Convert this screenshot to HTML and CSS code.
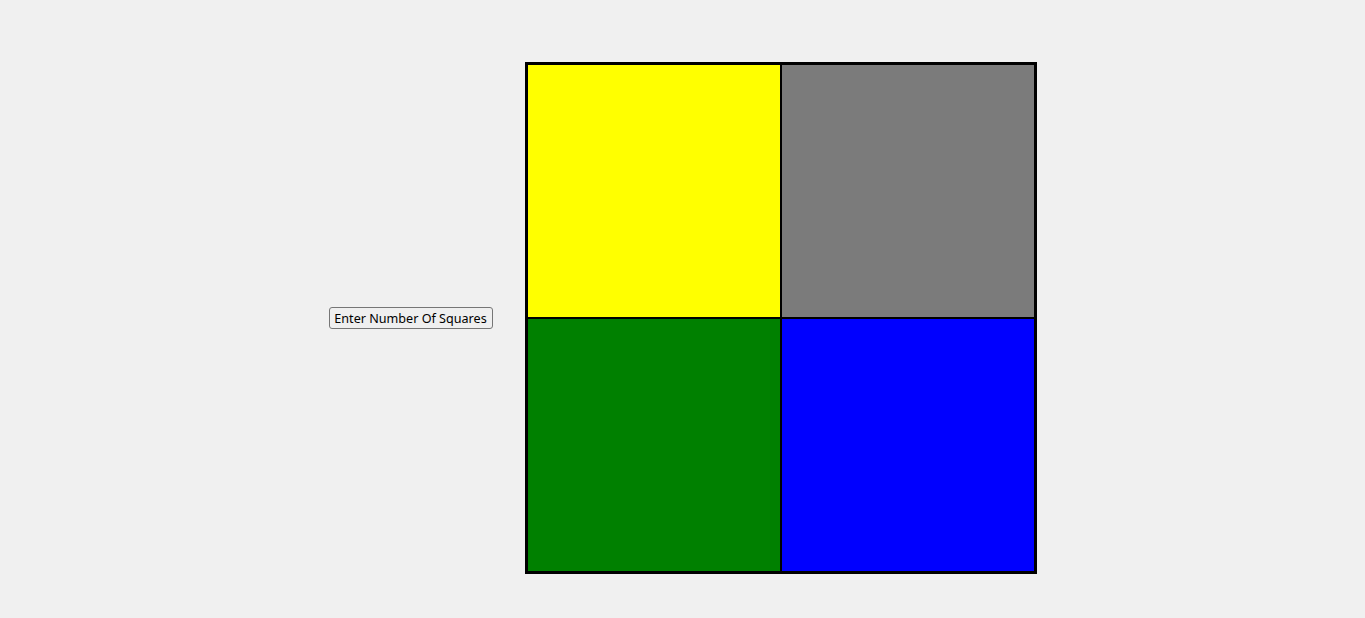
FILE: index.html
```html
<!DOCTYPE html>
<html>
<head>
<meta charset="utf-8">
<link rel="stylesheet" href="styles.css">
</head>
<body>
<div class="page">
  <button class="btn">Enter Number Of Squares</button>
  <div class="grid">
    <div class="cell yellow"></div>
    <div class="cell gray"></div>
    <div class="cell green"></div>
    <div class="cell blue"></div>
  </div>
</div>
</body>
</html>
```
FILE: styles.css
```css
html, body {
  margin: 0;
  padding: 0;
  background: #f0f0f0;
}
.page {
  display: flex;
  justify-content: center;
  align-items: center;
  gap: 32px;
  padding-top: 62px;
}
.btn {
  box-sizing: border-box;
  width: 164px;
  height: 22px;
  padding: 1px 0 0 0;
  font-family: "Noto Sans", "DejaVu Sans", sans-serif;
  font-size: 12.6px;
  color: #000;
  background: #efefef;
  border: 1px solid #767676;
  border-radius: 3px;
  line-height: 18px;
}
.grid {
  display: grid;
  grid-template-columns: 254px 254px;
  grid-template-rows: 254px 254px;
  border: 2px solid #000;
}
.cell {
  border: 1px solid #000;
}
.yellow { background: #ffff00; }
.gray { background: #7b7b7b; }
.green { background: #008000; }
.blue { background: #0000ff; }
```
